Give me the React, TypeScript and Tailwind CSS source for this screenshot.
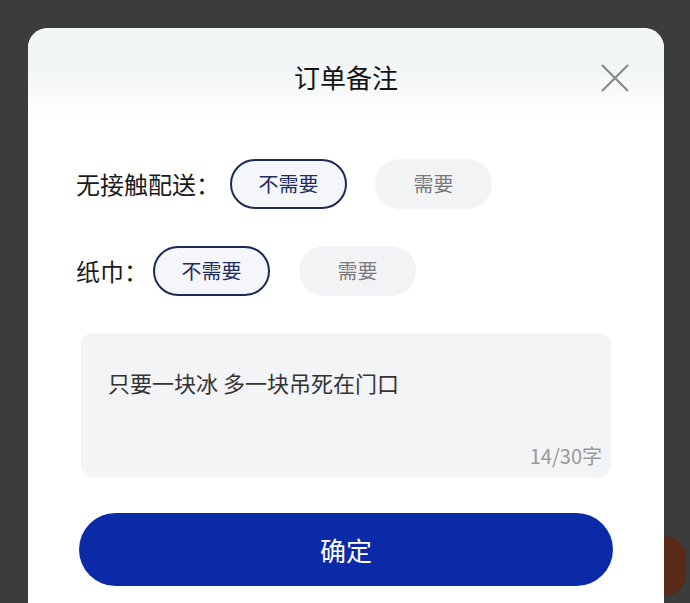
import React from "react";

const font = { fontFamily: '"Noto Sans CJK SC", "Noto Sans", sans-serif' };

function Pill({ label, active }: { label: string; active?: boolean }) {
  return active ? (
    <div className="flex h-[50px] w-[117px] items-center justify-center rounded-full border-2 border-[#1c2b55] bg-[#f4f6fa] text-[20px] text-[#1d2d5e]">
      {label}
    </div>
  ) : (
    <div className="flex h-[50px] w-[117px] items-center justify-center rounded-full bg-[#f2f3f5] text-[20px] text-[#7a7a7a]">
      {label}
    </div>
  );
}

export default function App() {
  return (
    <div className="relative h-[603px] w-[690px] overflow-hidden bg-[#3c3c3c] pt-[28px]" style={font}>
      <div className="absolute left-[642px] top-[536px] h-[60px] w-[44px] rounded-full bg-[#5a2a18]" />
      <div className="relative ml-[28px] h-[600px] w-[636px] overflow-hidden rounded-t-[20px] bg-white">
        <div className="relative h-[92px] bg-gradient-to-b from-[#f3f6f7] via-[#f3f6f7] to-white pt-[33px] text-center">
          <div className="text-[26px] leading-[32px] text-[#141414]">订单备注</div>
          <svg
            className="absolute left-[572px] top-[35px] h-[30px] w-[30px]"
            viewBox="0 0 30 30"
            fill="none"
            stroke="#8a8a8a"
            strokeWidth="2.2"
          >
            <path d="M2 2 L28 28 M28 2 L2 28" />
          </svg>
        </div>
        <div className="flex flex-col pt-[39px]">
          <div className="flex items-center pl-[48px]">
            <span className="w-[154px] text-[24px] text-[#1a1a1a]">无接触配送：</span>
            <div className="flex gap-[28px]">
              <Pill label="不需要" active />
              <Pill label="需要" />
            </div>
          </div>
          <div className="mt-[37px] flex items-center pl-[48px]">
            <span className="w-[77px] text-[24px] text-[#1a1a1a]">纸巾：</span>
            <div className="flex gap-[29px]">
              <Pill label="不需要" active />
              <Pill label="需要" />
            </div>
          </div>
          <div className="mx-[53px] mt-[37px] flex h-[144px] flex-col justify-between rounded-[12px] bg-[#f2f4f5] pb-[7px] pl-[27px] pr-[9px] pt-[34px]">
            <div className="text-[22px] leading-[30px] text-[#333333]">只要一块冰 多一块吊死在门口</div>
            <div className="text-right text-[20px] leading-[28px] text-[#9a9a9a]">14/30字</div>
          </div>
          <div className="mx-[51px] mt-[36px] flex h-[73px] items-center justify-center rounded-full bg-[#0b2aa8] text-[26px] text-white">
            确定
          </div>
        </div>
      </div>
    </div>
  );
}
